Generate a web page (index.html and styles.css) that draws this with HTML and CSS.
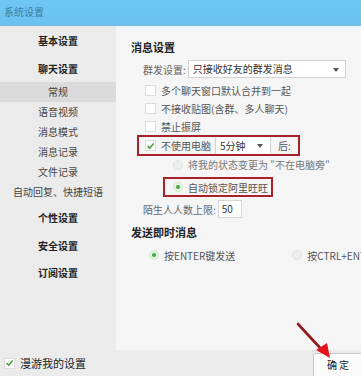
FILE: index.html
```html
<!DOCTYPE html>
<html lang="zh-CN">
<head>
<meta charset="utf-8">
<title>系统设置</title>
<link rel="stylesheet" href="styles.css">
</head>
<body>
<div class="window">
  <header class="titlebar">系统设置</header>
  <div class="main">
    <nav class="sidebar">
      <div class="nav-head h-first">基本设置</div>
      <div class="nav-head h-chat">聊天设置</div>
      <div class="nav-sub selected">常规</div>
      <div class="nav-sub">语音视频</div>
      <div class="nav-sub">消息模式</div>
      <div class="nav-sub">消息记录</div>
      <div class="nav-sub">文件记录</div>
      <div class="nav-sub">自动回复、快捷短语</div>
      <div class="nav-head h-personal">个性设置</div>
      <div class="nav-head">安全设置</div>
      <div class="nav-head">订阅设置</div>
    </nav>
    <section class="content">
      <h3 class="sec-title t-msg">消息设置</h3>
      <div class="select-row">
        <span class="label">群发设置:</span>
        <div class="select wide">只接收好友的群发消息<span class="caret"></span></div>
      </div>
      <div class="check-row"><span class="box"></span>多个聊天窗口默认合并到一起</div>
      <div class="check-row"><span class="box"></span>不接收贴图(含群、多人聊天)</div>
      <div class="check-row"><span class="box"></span>禁止振屏</div>
      <div class="idle-row">
        <span class="box checked"><svg viewBox="0 0 12 12" width="12" height="12"><path d="M2.2 6.2 L5 9 L10.2 2.8" fill="none" stroke="#3b9b35" stroke-width="2"/></svg></span>
        <span class="idle-label">不使用电脑</span>
        <div class="select small">5分钟<span class="caret"></span></div>
        <span class="after">后:</span>
      </div>
      <div class="radio-row sub disabled"><span class="radio"></span>将我的状态变更为 "不在电脑旁"</div>
      <div class="radio-row sub boxed"><span class="radio on"></span>自动锁定阿里旺旺</div>
      <div class="limit-row">
        <span class="label">陌生人人数上限:</span>
        <span class="num-input">50</span>
      </div>
      <h3 class="sec-title t-send">发送即时消息</h3>
      <div class="send-row">
        <span class="opt"><span class="radio on"></span>按ENTER键发送</span>
        <span class="opt opt-ctrl"><span class="radio"></span>按CTRL+ENTER键发送</span>
      </div>
    </section>
  </div>
  <footer class="footer">
    <div class="roam"><span class="box checked"><svg viewBox="0 0 12 12" width="12" height="12"><path d="M2.2 6.2 L5 9 L10.2 2.8" fill="none" stroke="#3b9b35" stroke-width="2"/></svg></span>漫游我的设置</div>
    <button class="ok-btn">确&nbsp;定</button>
  </footer>
  <svg class="arrow" width="50" height="50" viewBox="0 0 50 50">
    <line x1="4" y1="4" x2="28" y2="30" stroke="#8e1b1b" stroke-width="2.6" stroke-linecap="round"/>
    <polygon points="22,30 33,23 36,38" fill="#e3151b"/>
  </svg>
</div>
</body>
</html>
```

FILE: styles.css
```css
* { box-sizing: border-box; margin: 0; padding: 0; }
html, body { width: 361px; height: 376px; overflow: hidden; }
body {
  font-family: "Noto Sans CJK SC", "Noto Sans", sans-serif;
  font-size: 10px;
  color: #444;
  background: #f5f5f5;
}
.window {
  position: relative;
  width: 361px;
  height: 376px;
  display: flex;
  flex-direction: column;
}
.titlebar {
  height: 26px;
  flex: none;
  background: linear-gradient(#6fc7f3, #6bc2ef);
  border-bottom: 1px solid #7cb7d9;
  color: #3e7ea6;
  font-size: 10px;
  line-height: 24px;
  padding-left: 4px;
}
.main {
  flex: 1;
  display: flex;
  min-height: 0;
}
.sidebar {
  width: 116px;
  flex: none;
  background: #ebebeb;
  display: flex;
  flex-direction: column;
  color: #333;
}
.nav-head {
  height: 27px;
  line-height: 27px;
  text-align: center;
  font-weight: bold;
  font-size: 10px;
  color: #222;
}
.h-first { height: 29px; line-height: 30px; }
.h-chat { height: 27px; line-height: 27px; }
.h-personal { margin-top: 2px; height: 28px; line-height: 28px; }
.nav-sub {
  height: 20px;
  line-height: 20px;
  text-align: center;
  color: #444;
}
.nav-sub.selected { background: #dadada; }
.content {
  flex: 1;
  min-width: 0;
  overflow: hidden;
  padding-left: 15px;
  background: #f5f5f5;
  border-top: 3px solid #eef7fb;
  display: flex;
  flex-direction: column;
  align-items: flex-start;
  white-space: nowrap;
}
.sec-title {
  font-size: 11px;
  font-weight: bold;
  color: #222;
  height: 20px;
  line-height: 20px;
}
.t-msg { margin-top: 8px; }
.t-send { margin-top: 1px; height: 24px; line-height: 24px; }
.label { color: #666; }
.select-row {
  height: 24px;
  display: flex;
  align-items: center;
  padding-left: 12px;
}
.select {
  position: relative;
  background: #fff;
  border: 1px solid #d2d2d2;
  height: 18px;
  line-height: 16px;
  color: #333;
  padding-left: 4px;
}
.select.wide { width: 158px; margin-left: 2px; }
.caret {
  position: absolute;
  right: 6px;
  top: 7px;
  border-left: 3.5px solid transparent;
  border-right: 3.5px solid transparent;
  border-top: 4px solid #555;
}
.check-row {
  height: 18px;
  display: flex;
  align-items: center;
  padding-left: 14px;
  color: #555;
}
.check-row:first-of-type { margin-top: 1px; }
.box {
  width: 11px;
  height: 11px;
  background: #fff;
  border: 1px solid #dcdcdc;
  margin-right: 5px;
  display: inline-flex;
  align-items: center;
  justify-content: center;
  flex: none;
}
.box svg { width: 10px; height: 10px; }
.idle-row {
  width: 163px;
  height: 21px;
  margin-left: 6px;
  border: 2px solid #a8202a;
  display: flex;
  align-items: center;
  padding-left: 6px;
  color: #555;
}
.idle-label { margin-right: 4px; }
.select.small {
  width: 56px;
  height: 17px;
  line-height: 15px;
  border-top-color: #fff;
  border-bottom-color: #fff;
}
.select.small .caret { top: 6px; right: 7px; }
.after { margin-left: 7px; }
.radio-row {
  display: flex;
  align-items: center;
  color: #555;
}
.radio-row.sub.disabled {
  height: 17px;
  padding-left: 42px;
  color: #777;
}
.radio-row.boxed {
  margin-top: 4px;
  margin-left: 32px;
  height: 20px;
  width: 110px;
  border: 2px solid #a8202a;
  padding-left: 8px;
}
.radio {
  width: 10px;
  height: 10px;
  border-radius: 50%;
  background: #eeeeee;
  border: 1px solid #e2e2e2;
  margin-right: 5px;
  flex: none;
  display: inline-flex;
  align-items: center;
  justify-content: center;
}
.radio.on {
  background: #e2f3e0;
  border-color: #d4ebd1;
}
.radio.on::after {
  content: "";
  width: 4px;
  height: 4px;
  border-radius: 50%;
  background: #4aa746;
}
.limit-row {
  margin-top: 2px;
  height: 20px;
  display: flex;
  align-items: center;
  padding-left: 12px;
}
.num-input {
  width: 24px;
  height: 18px;
  line-height: 16px;
  background: #fff;
  border: 1px solid #d5d5d5;
  padding-left: 3px;
  margin-left: 2px;
  color: #333;
}
.send-row {
  margin-top: 1px;
  height: 20px;
  display: flex;
  align-items: center;
  padding-left: 18px;
  color: #555;
}
.opt { display: inline-flex; align-items: center; flex: none; }
.opt-ctrl { margin-left: 57px; }
.footer {
  height: 26px;
  flex: none;
  background: #ebebeb;
  display: flex;
  align-items: flex-start;
  justify-content: space-between;
}
.roam {
  display: flex;
  align-items: center;
  height: 26px;
  padding-left: 4px;
  font-size: 11px;
  color: #222;
}
.roam .box { margin-right: 5px; }
.ok-btn {
  margin-top: 3px;
  width: 50px;
  height: 26px;
  background: #fbfbfb;
  border: 1px solid #c9c9c9;
  border-radius: 2px;
  font-family: inherit;
  font-size: 10px;
  color: #222;
  margin-right: -2px;
  padding-bottom: 4px;
}
.arrow {
  position: absolute;
  left: 294px;
  top: 320px;
}
```
